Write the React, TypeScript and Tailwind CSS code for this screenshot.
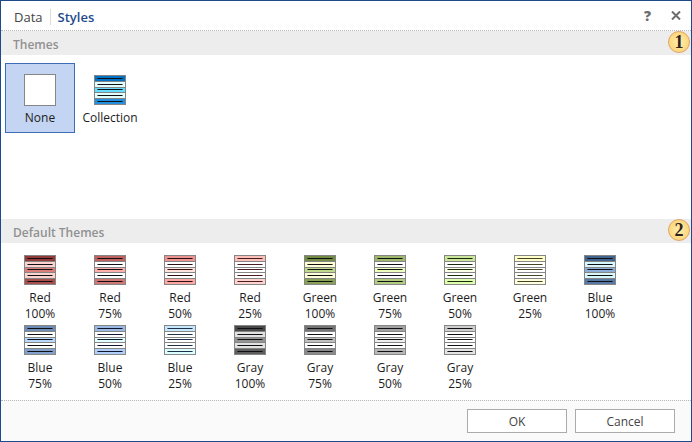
import { useState } from "react";

type Bands = [string, string, string, string, string];

interface Theme {
  name: string;
  level?: string;
  bands: Bands | null;
  ink?: string;
}

const themes: Theme[] = [
  { name: "None", bands: null },
  { name: "Collection", bands: ["#0072c6", "#e1ffff", "#66dcff", "#e1ffff", "#2490e0"] },
];

const defaultThemes: Theme[] = [
  { name: "Red", level: "100%", bands: ["#943a38", "#ffd2d0", "#de7e7b", "#ffd2d0", "#a84e4b"] },
  { name: "Red", level: "75%", bands: ["#c0615e", "#ffffff", "#ffb0ac", "#ffffff", "#d27874"] },
  { name: "Red", level: "50%", bands: ["#ed9490", "#ffffff", "#ffe4de", "#ffffff", "#ffa8a3"], ink: "#2c0d10" },
  { name: "Red", level: "25%", bands: ["#ffc0bc", "#ffffff", "#ffffff", "#ffffff", "#ffd4d0"], ink: "#4a1c20" },
  { name: "Green", level: "100%", bands: ["#728c42", "#ffffd6", "#c0da8c", "#ffffd6", "#88a254"] },
  { name: "Green", level: "75%", bands: ["#9eb86c", "#ffffff", "#edffbc", "#ffffff", "#b2cc80"] },
  { name: "Green", level: "50%", bands: ["#cae69a", "#ffffff", "#fcffe8", "#ffffff", "#deffae"], ink: "#182808" },
  { name: "Green", level: "25%", bands: ["#ffffcc", "#ffffff", "#ffffff", "#ffffff", "#ffffe0"], ink: "#444420" },
  { name: "Blue", level: "100%", bands: ["#40648f", "#d8f8ff", "#8caed8", "#d8f8ff", "#5678a2"] },
  { name: "Blue", level: "75%", bands: ["#6c8eb6", "#ffffff", "#b8d8ff", "#ffffff", "#82a2cc"] },
  { name: "Blue", level: "50%", bands: ["#9abae4", "#ffffff", "#e4ffff", "#ffffff", "#b0d0fa"], ink: "#10142c" },
  { name: "Blue", level: "25%", bands: ["#c6e8ff", "#ffffff", "#ffffff", "#ffffff", "#dcffff"], ink: "#203048" },
  { name: "Gray", level: "100%", bands: ["#484848", "#e2e2e2", "#949494", "#e2e2e2", "#5e5e5e"] },
  { name: "Gray", level: "75%", bands: ["#747474", "#ffffff", "#c0c0c0", "#ffffff", "#8a8a8a"] },
  { name: "Gray", level: "50%", bands: ["#a2a2a2", "#ffffff", "#eeeeee", "#ffffff", "#b8b8b8"] },
  { name: "Gray", level: "25%", bands: ["#cecece", "#ffffff", "#ffffff", "#ffffff", "#e4e4e4"] },
];

const bandTops = [1, 7, 13, 18, 24];
const bandHeights = [5, 5, 4, 5, 5];
const inkTops = [3, 9, 14, 20, 26];

function Swatch({ bands, ink = "#101014" }: { bands: Bands | null; ink?: string }) {
  if (!bands) {
    return <span className="size-8 shrink-0 border border-[#868686] bg-white" />;
  }
  return (
    <svg
      className="shrink-0"
      width="32"
      height="30"
      viewBox="0 0 32 30"
      shapeRendering="crispEdges"
      aria-hidden="true"
    >
      <rect width="32" height="30" fill="#868686" />
      {bands.map((fill, i) => (
        <g key={i}>
          <rect x="1" y={bandTops[i]} width="30" height={bandHeights[i]} fill={fill} />
          <rect x="3" y={inkTops[i]} width="26" height="1" fill={ink} opacity="0.55" />
          <rect x="4" y={inkTops[i]} width="24" height="1" fill={ink} />
        </g>
      ))}
    </svg>
  );
}

function ThemeTile({ theme, selected, onSelect }: { theme: Theme; selected: boolean; onSelect: () => void }) {
  return (
    <button
      type="button"
      aria-pressed={selected}
      onClick={onSelect}
      className={`flex h-[70px] w-[70px] flex-col items-center border text-xs leading-4 text-[#1c1c1c] ${
        theme.level ? "pt-[3px]" : "pt-2.5"
      } ${selected ? "border-[#3f6db5] bg-[#c3d5f2]" : "border-transparent"}`}
    >
      <span className={`flex shrink-0 items-center ${theme.level ? "mb-[5px] h-[30px]" : "mb-1 h-8"}`}>
        <Swatch bands={theme.bands} ink={theme.ink} />
      </span>
      <span>{theme.name}</span>
      {theme.level && <span>{theme.level}</span>}
    </button>
  );
}

function SectionBar({ title, number }: { title: string; number: number }) {
  return (
    <div className="flex h-6 items-start justify-between bg-[#ededed] pr-px pl-3">
      <h2 className="pt-1 text-xs leading-5 font-semibold text-[#919191]">{title}</h2>
      <span className="flex size-[22px] items-center justify-center rounded-full border border-[#e0a468] bg-radial from-[#fff0b0] to-[#fbcb62] font-['Liberation_Serif',serif] text-lg leading-5 font-bold text-[#30231c]">
        {number}
      </span>
    </div>
  );
}

export default function App() {
  const [selected, setSelected] = useState("None");
  const keyOf = (t: Theme) => t.name + (t.level ?? "");
  const tile = (t: Theme) => (
    <ThemeTile key={keyOf(t)} theme={t} selected={selected === keyOf(t)} onSelect={() => setSelected(keyOf(t))} />
  );

  return (
    <div className="flex min-h-screen flex-col border border-[#1e4a8c] bg-white font-['Open_Sans','Noto_Sans',sans-serif]">
      <header className="flex h-[30px] items-center justify-between border-b border-dotted border-[#b8b8b8] pr-1.5 pl-[13px]">
        <nav className="flex items-center pt-0.5 text-[13px] leading-5">
          <button type="button" className="border-r border-[#dcdcdc] pr-[7px] leading-4 text-[#444444]">Data</button>
          <button type="button" className="pl-[7px] font-semibold text-[#1e4a8c]">Styles</button>
        </nav>
        <div className="flex items-center gap-4 text-[#6c6c6c]">
          <button type="button" aria-label="Help" className="text-sm leading-5 font-extrabold">?</button>
          <button type="button" aria-label="Close" className="p-1">
            <svg width="10" height="9" viewBox="0 0 10 9" fill="none" stroke="currentColor" strokeWidth="2" aria-hidden="true">
              <path d="M1 .5 9 8.500M9 .5 1 8.500" />
            </svg>
          </button>
        </div>
      </header>

      <section>
        <SectionBar title="Themes" number={1} />
        <div className="flex min-h-[164px] flex-wrap content-start pt-2 pl-1">{themes.map(tile)}</div>
      </section>

      <section className="flex-1">
        <SectionBar title="Default Themes" number={2} />
        <div className="flex flex-wrap content-start pt-2 pl-1">{defaultThemes.map(tile)}</div>
      </section>

      <footer className="flex justify-end gap-2 border-t border-dotted border-[#b8b8b8] bg-[#fafafa] py-2 pr-4 pl-4 text-xs leading-4 text-[#444444]">
        <button type="button" className="h-6 w-[100px] border border-[#ababab] bg-white pt-px">OK</button>
        <button type="button" className="h-6 w-[100px] border border-[#ababab] bg-white pt-px">Cancel</button>
      </footer>
    </div>
  );
}
